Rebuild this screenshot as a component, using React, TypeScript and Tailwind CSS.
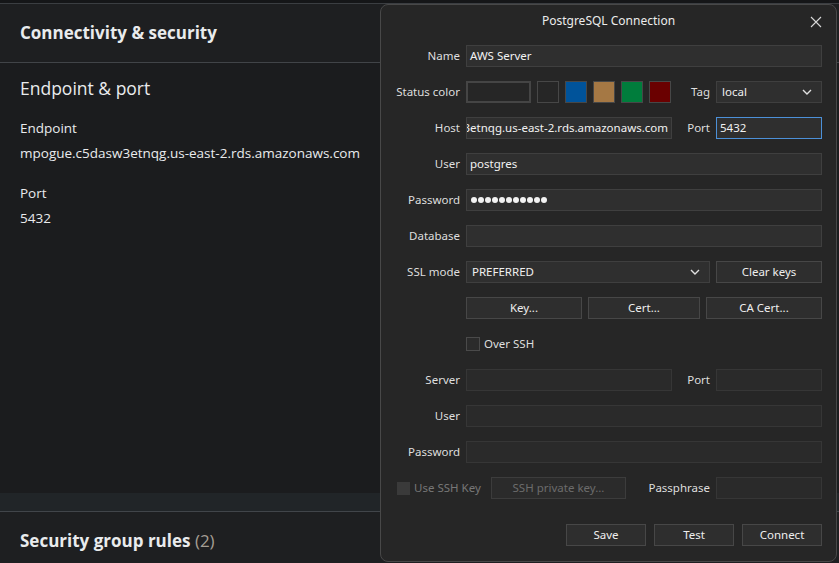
import React from "react";

const dlgFont = { fontFamily: '"Noto Sans", "Open Sans", sans-serif' };

function Input({ w, focus, dim, children }: { w?: string; focus?: boolean; dim?: boolean; children?: React.ReactNode }) {
  const base = "h-[22px] flex items-center px-[3px] text-[11.5px] text-[#f2f2f2] overflow-hidden whitespace-nowrap";
  const color = focus
    ? "bg-[#2f2f2f] border border-[#4c90d8]"
    : dim
    ? "bg-[#2a2a2a] border border-[#363636]"
    : "bg-[#2f2f2f] border border-[#3f3f3f]";
  return <div className={`${base} ${color} ${w ?? "flex-1"}`}>{children}</div>;
}

function Btn({ w, children, disabled }: { w: string; children: React.ReactNode; disabled?: boolean }) {
  return (
    <div
      className={`h-[22px] flex items-center justify-center text-[11.5px] ${w} ${
        disabled ? "bg-[#2b2b2b] border border-[#3c3c3c] text-[#6c6c6c]" : "bg-[#2e2e2e] border border-[#474747] text-[#eeeeee]"
      }`}
    >
      {children}
    </div>
  );
}

function Chevron() {
  return (
    <svg width="10" height="6" viewBox="0 0 10 6" className="shrink-0">
      <path d="M1 1 L5 5 L9 1" fill="none" stroke="#e0e0e0" strokeWidth="1.4" />
    </svg>
  );
}

function Select({ w, value }: { w: string; value: string }) {
  return (
    <div className={`h-[22px] flex items-center justify-between pl-[5px] pr-[9px] text-[11.5px] text-[#f0f0f0] bg-[#2f2f2f] border border-[#3f3f3f] ${w}`}>
      <span>{value}</span>
      <Chevron />
    </div>
  );
}

function Row({ label, children }: { label: string; children: React.ReactNode }) {
  return (
    <div className="flex items-center h-[22px]">
      <div className="w-[79px] text-right text-[11.5px] text-[#dedede] shrink-0">{label}</div>
      <div className="ml-[6px] w-[356px] flex items-center">{children}</div>
    </div>
  );
}

function SideLabel({ w, children }: { w: string; children: React.ReactNode }) {
  return <div className={`${w} text-right pr-[6px] text-[11.5px] text-[#dedede] shrink-0`}>{children}</div>;
}

export default function App() {
  return (
    <div
      className="relative w-[839px] h-[563px] overflow-hidden bg-[#1b1c1e]"
      style={{ fontFamily: '"Open Sans", "Noto Sans", sans-serif' }}
    >
      {/* page behind */}
      <div className="flex flex-col h-full">
        <div className="h-[3px] bg-[#151618]" />
        <div className="h-[1px] bg-[#3b3e42]" />
        <div className="h-[59px] flex items-center px-[20px] bg-[#1e1f21] border-b border-[#414448] text-[17px] font-bold text-[#e9ebed]">
          Connectivity &amp; security
        </div>
        <div className="flex-1 px-[20px] pt-[13px] bg-[#1b1c1e] text-[#e9ebed]">
          <div className="text-[17.5px] leading-[24px]">Endpoint &amp; port</div>
          <div className="mt-[18px] text-[13.5px] leading-[20px]">Endpoint</div>
          <div className="mt-[5px] text-[13.5px] leading-[20px]">mpogue.c5dasw3etnqg.us-east-2.rds.amazonaws.com</div>
          <div className="mt-[20px] text-[13.5px] leading-[20px]">Port</div>
          <div className="mt-[5px] text-[13.5px] leading-[20px]">5432</div>
        </div>
        <div className="h-[18px] bg-[#212528]" />
        <div className="h-[1px] bg-[#41454a]" />
        <div className="h-[51px] px-[20px] pt-[17px] bg-[#1e1f21] text-[17px] leading-[24px] font-bold text-[#e9ebed]">
          Security group rules <span className="font-normal text-[#a59e94]">(2)</span>
        </div>
      </div>

      {/* dialog */}
      <div
        className="absolute left-[380px] top-[4px] w-[457px] h-[558px] rounded-[8px] border border-[#484848] bg-[#262626]"
        style={dlgFont}
      >
        <div className="relative h-[32px] flex items-center justify-center text-[12px] text-[#ececec]">
          PostgreSQL Connection
          <svg className="absolute left-[429px] top-[11px]" width="12" height="12" viewBox="0 0 12 12">
            <path d="M1 1 L11 11 M11 1 L1 11" stroke="#d8d8d8" strokeWidth="1.1" fill="none" />
          </svg>
        </div>
        <div className="pt-[8px] flex flex-col gap-[14px]">
          <Row label="Name">
            <Input>AWS Server</Input>
          </Row>
          <Row label="Status color">
            <div className="w-[65px] h-[22px] border-2 border-[#454545] bg-[#262626] shrink-0" />
            <div className="ml-[6px] flex gap-[6px]">
              <div className="w-[22px] h-[22px] border border-[#474747] bg-[#262626]" />
              <div className="w-[22px] h-[22px] border border-[#474747] bg-[#00539a]" />
              <div className="w-[22px] h-[22px] border border-[#474747] bg-[#a57844]" />
              <div className="w-[22px] h-[22px] border border-[#474747] bg-[#007d3c]" />
              <div className="w-[22px] h-[22px] border border-[#474747] bg-[#6a0000]" />
            </div>
            <SideLabel w="flex-1">Tag</SideLabel>
            <Select w="w-[106px]" value="local" />
          </Row>
          <Row label="Host">
            <div className="w-[206px] h-[22px] flex items-center justify-end pr-[3px] overflow-hidden whitespace-nowrap bg-[#2f2f2f] border border-[#3f3f3f] text-[11.5px] text-[#f2f2f2]">
              <span className="shrink-0">mpogue.c5dasw3etnqg.us-east-2.rds.amazonaws.com</span>
            </div>
            <SideLabel w="w-[44px]">Port</SideLabel>
            <Input w="w-[106px]" focus>5432</Input>
          </Row>
          <Row label="User">
            <Input>postgres</Input>
          </Row>
          <Row label="Password">
            <Input>
              <div className="flex gap-[1px] pl-[1px]">
                {Array.from({ length: 11 }).map((_, i) => (
                  <div key={i} className="w-[6px] h-[6px] rounded-full bg-[#f2f2f2]" />
                ))}
              </div>
            </Input>
          </Row>
          <Row label="Database">
            <Input />
          </Row>
          <Row label="SSL mode">
            <Select w="w-[244px]" value="PREFERRED" />
            <div className="ml-[6px]">
              <Btn w="w-[106px]">Clear keys</Btn>
            </div>
          </Row>
          <Row label="">
            <div className="flex gap-[6px]">
              <Btn w="w-[116px]">Key...</Btn>
              <Btn w="w-[112px]">Cert...</Btn>
              <Btn w="w-[116px]">CA Cert...</Btn>
            </div>
          </Row>
          <Row label="">
            <div className="w-[14px] h-[14px] border border-[#4a4a4a] bg-[#2b2b2b]" />
            <span className="ml-[4px] text-[11.5px] text-[#dedede]">Over SSH</span>
          </Row>
          <Row label="Server">
            <Input w="w-[206px]" dim />
            <SideLabel w="w-[44px]">Port</SideLabel>
            <Input w="w-[106px]" dim />
          </Row>
          <Row label="User">
            <Input dim />
          </Row>
          <Row label="Password">
            <Input dim />
          </Row>
          <div className="flex items-center h-[22px] pl-[16px]">
            <div className="w-[13px] h-[13px] bg-[#3a3a3a] shrink-0" />
            <span className="ml-[4px] w-[74px] text-[11.5px] text-[#777777] whitespace-nowrap">Use SSH Key</span>
            <div className="ml-[3px]">
              <Btn w="w-[135px]" disabled>
                SSH private key...
              </Btn>
            </div>
            <SideLabel w="w-[90px]">Passphrase</SideLabel>
            <Input w="w-[106px]" dim />
          </div>
          <div className="mt-[11px] flex justify-end gap-[8px] pr-[14px]">
            <Btn w="w-[80px]">Save</Btn>
            <Btn w="w-[80px]">Test</Btn>
            <Btn w="w-[80px]">Connect</Btn>
          </div>
        </div>
      </div>
    </div>
  );
}
